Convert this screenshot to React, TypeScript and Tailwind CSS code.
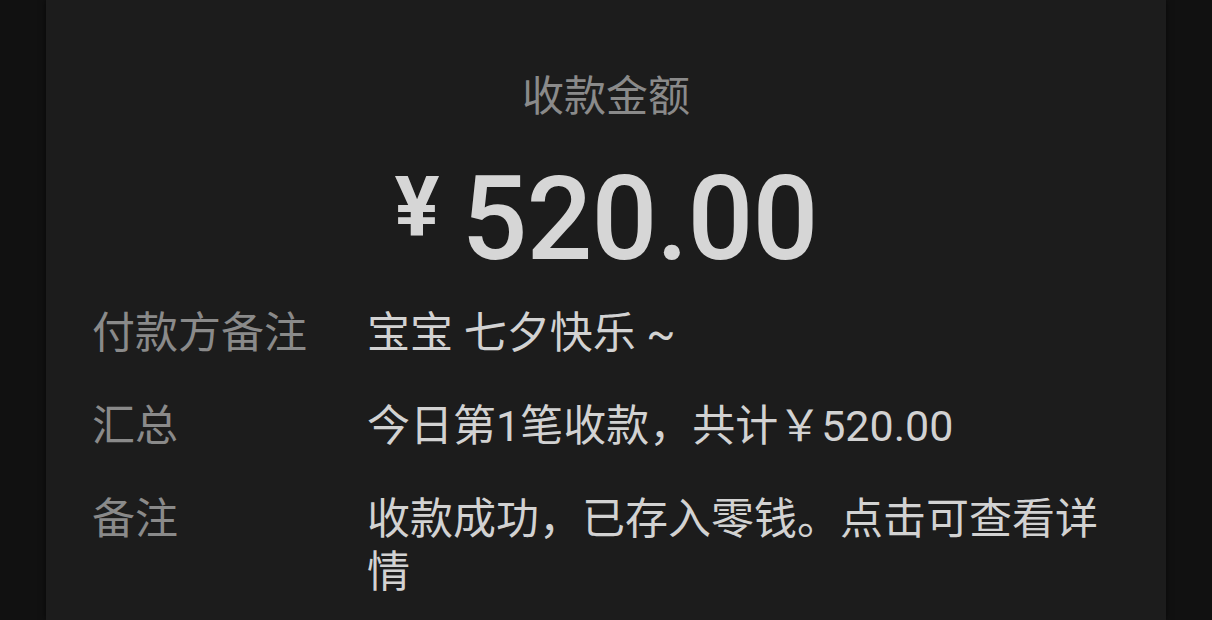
import React from 'react';

const rows = [
    { label: '付款方备注', value: '宝宝 七夕快乐 ~' },
    { label: '汇总', value: '今日第1笔收款，共计￥520.00' },
    { label: '备注', value: '收款成功，已存入零钱。点击可查看详情' },
];

export default function App() {
    return (
        <div className="h-[620px] overflow-hidden bg-[#111111] px-[46px] font-['Roboto','Noto_Sans_CJK_SC',sans-serif]">
            <div className="h-full bg-[#1c1c1c] px-[46px] pt-[69px] shadow-[0_0_6px_rgba(0,0,0,0.6)]">
                {/* Title */}
                <div className="text-center text-[42px] leading-[56px] text-[#8a8a8a]">收款金额</div>

                {/* Amount */}
                <div className="mt-[25px] flex items-start justify-center text-[#d6d6d6]">
                    <span className="mr-[22px] mt-[16px] text-[84px] font-bold leading-[84px]">¥</span>
                    <span className="text-[116px] font-medium leading-[138px] tracking-[-1px]">520.00</span>
                </div>

                {/* Details */}
                <div className="mt-[19px] flex flex-col gap-[40px]">
                    {rows.map((row, i) => (
                        <div key={i} className="flex text-[43px] leading-[53px]">
                            <div className="w-[275px] shrink-0 text-[#8a8a8a]">{row.label}</div>
                            <div className="flex-1 text-[#d2d2d2]">{row.value}</div>
                        </div>
                    ))}
                </div>
            </div>
        </div>
    );
}
